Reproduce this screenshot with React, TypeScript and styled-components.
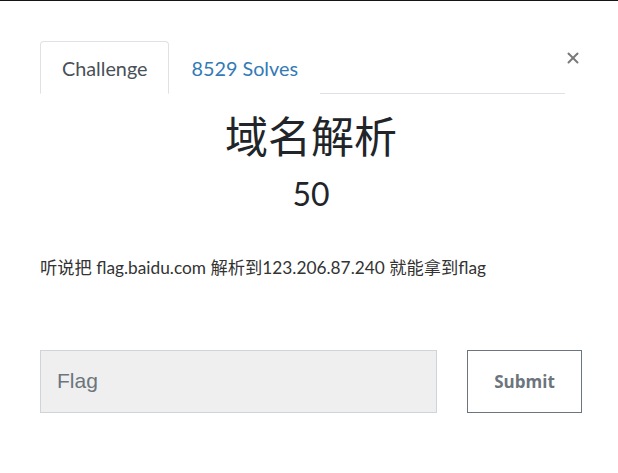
import { createGlobalStyle, styled } from 'styled-components';
import { X } from 'lucide-react';

const GlobalStyle = createGlobalStyle`
  html, body {
    margin: 0;
    padding: 0;
    background: #fff;
  }
  body {
    font-family: Lato, "Noto Sans CJK SC", sans-serif;
    color: #212529;
  }
`;

const challenge = {
  name: '域名解析',
  value: 50,
  solves: 8529,
  description: '听说把 flag.baidu.com 解析到123.206.87.240 就能拿到flag',
};

const App = () => {
  return (
    <>
      <GlobalStyle />
      <ModalWrapper>
        <Header>
          <TabList>
            <Tab $active>Challenge</Tab>
            <Tab>{challenge.solves} Solves</Tab>
          </TabList>
          <CloseButton aria-label="Close">
            <X size={18} strokeWidth={2.6} />
          </CloseButton>
        </Header>
        <ChallengeName>{challenge.name}</ChallengeName>
        <ChallengeValue>{challenge.value}</ChallengeValue>
        <Description>{challenge.description}</Description>
        <SubmitRow>
          <FlagInput placeholder="Flag" />
          <SubmitButton>Submit</SubmitButton>
        </SubmitRow>
      </ModalWrapper>
    </>
  );
};

export default App;

const ModalWrapper = styled.div`
  border-top: 1px solid #151515;
  padding: 40px 36px 60px 40px;
`;

const Header = styled.div`
  display: flex;
  align-items: flex-start;
`;

const TabList = styled.div`
  display: flex;
  width: 525px;
  border-bottom: 1px solid #dee2e6;
`;

const Tab = styled.div<{ $active?: boolean }>`
  height: 51px;
  display: flex;
  align-items: center;
  padding: 0 21px;
  margin-bottom: -1px;
  font-size: 19.8px;
  border: 1px solid ${({ $active }) => ($active ? '#dee2e6' : 'transparent')};
  border-bottom-color: ${({ $active }) => ($active ? '#fff' : 'transparent')};
  border-radius: 4px 4px 0 0;
  background: #fff;
  color: ${({ $active }) => ($active ? '#495057' : '#337ab7')};
  cursor: pointer;
`;

const CloseButton = styled.button`
  margin: 8px 0 0 -1px;
  width: 18px;
  height: 18px;
  padding: 0;
  border: none;
  background: none;
  color: #7a7a7a;
  display: flex;
  align-items: center;
  justify-content: center;
`;

const ChallengeName = styled.h2`
  margin: 17px 0 0;
  font-size: 43px;
  font-weight: 400;
  line-height: 1.2;
  text-align: center;
  color: #212529;
`;

const ChallengeValue = styled.h3`
  margin: 12px 0 0;
  font-size: 32px;
  font-weight: 400;
  line-height: 1.2;
  text-align: center;
  color: #212529;
`;

const Description = styled.p`
  margin: 42px 0 0;
  font-size: 17.3px;
  line-height: 1.5;
  color: #333;
`;

const SubmitRow = styled.div`
  display: flex;
  gap: 30px;
  margin-top: 69px;
`;

const FlagInput = styled.input`
  box-sizing: border-box;
  width: 397px;
  height: 63px;
  padding: 0 16px;
  font-family: "Liberation Sans", Arial, sans-serif;
  font-size: 21px;
  color: #495057;
  background: #efefef;
  border: 1px solid #ced4da;
  border-radius: 0;
  outline: none;

  &::placeholder {
    color: #6c757d;
  }
`;

const SubmitButton = styled.button`
  box-sizing: border-box;
  width: 115px;
  height: 63px;
  font-family: "Open Sans", sans-serif;
  font-size: 17px;
  font-weight: 700;
  color: #6c757d;
  background: #fff;
  border: 1px solid #6c757d;
  border-radius: 0;
`;
